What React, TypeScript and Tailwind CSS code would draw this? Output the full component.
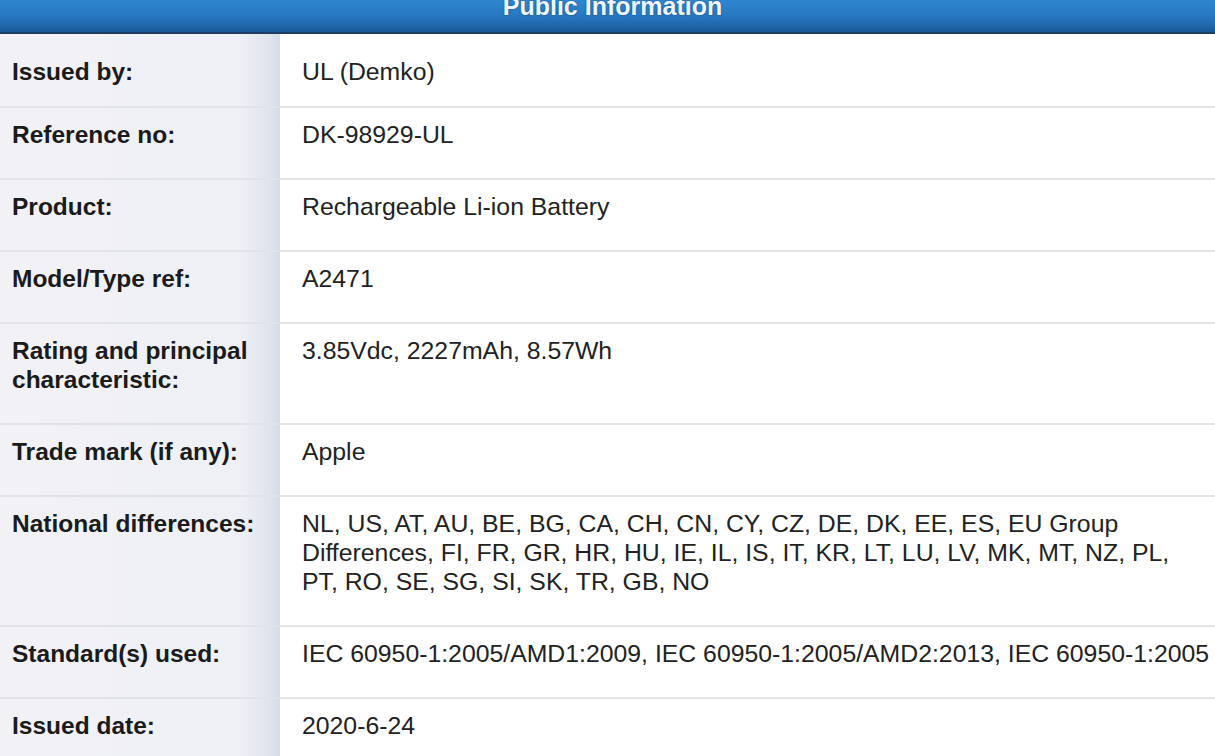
import React from "react";

const rows: { label: string[]; value: string[] }[] = [
    { label: ["Issued by:"], value: ["UL (Demko)"] },
    { label: ["Reference no:"], value: ["DK-98929-UL"] },
    { label: ["Product:"], value: ["Rechargeable Li-ion Battery"] },
    { label: ["Model/Type ref:"], value: ["A2471"] },
    { label: ["Rating and principal", "characteristic:"], value: ["3.85Vdc, 2227mAh, 8.57Wh"] },
    { label: ["Trade mark (if any):"], value: ["Apple"] },
    {
        label: ["National differences:"],
        value: [
            "NL, US, AT, AU, BE, BG, CA, CH, CN, CY, CZ, DE, DK, EE, ES, EU Group",
            "Differences, FI, FR, GR, HR, HU, IE, IL, IS, IT, KR, LT, LU, LV, MK, MT, NZ, PL,",
            "PT, RO, SE, SG, SI, SK, TR, GB, NO",
        ],
    },
    { label: ["Standard(s) used:"], value: ["IEC 60950-1:2005/AMD1:2009, IEC 60950-1:2005/AMD2:2013, IEC 60950-1:2005"] },
    { label: ["Issued date:"], value: ["2020-6-24"] },
];

export default function App() {
    return (
        <div className="h-[756px] w-[1215px] overflow-hidden bg-white font-['Liberation_Sans',Arial,sans-serif] text-[24.5px] leading-[29px]">
            {/* header bar */}
            <div className="h-[34px] overflow-hidden border-b-2 border-[#1f3d62] bg-[linear-gradient(to_bottom,#2e86d1_0%,#2676bf_55%,#1a5996_100%)] pl-[10px] text-center">
                <div className="mt-[-6px] text-[25px] font-bold leading-[25px] text-[#eef6ff] [text-shadow:0_0_2px_rgba(10,40,80,0.6)]">
                    Public Information
                </div>
            </div>
            {rows.map((row, i) => (
                <div key={i} className="flex">
                    <div
                        className={
                            "w-[280px] shrink-0 border-b-2 border-[#e2e3e8] bg-[linear-gradient(to_right,#f2f1f6_0%,#eef0f5_86%,#dfe4ee_96%,#d6dce8_100%)] pl-[12px] font-bold text-[#1b1b1b] " +
                            (i === 0 ? "pt-[23px] pb-[20px]" : "pt-[12px] pb-[29px]")
                        }
                    >
                        {row.label.map((l, j) => (
                            <div key={j}>{l}</div>
                        ))}
                    </div>
                    <div
                        className={
                            "flex-1 whitespace-nowrap border-b-2 border-[#e4e4e4] pl-[22px] text-[24.8px] text-[#222] " +
                            (i === 0 ? "pt-[23px] pb-[20px]" : "pt-[12px] pb-[29px]")
                        }
                    >
                        {row.value.map((v, j) => (
                            <div key={j}>{v}</div>
                        ))}
                    </div>
                </div>
            ))}
        </div>
    );
}
